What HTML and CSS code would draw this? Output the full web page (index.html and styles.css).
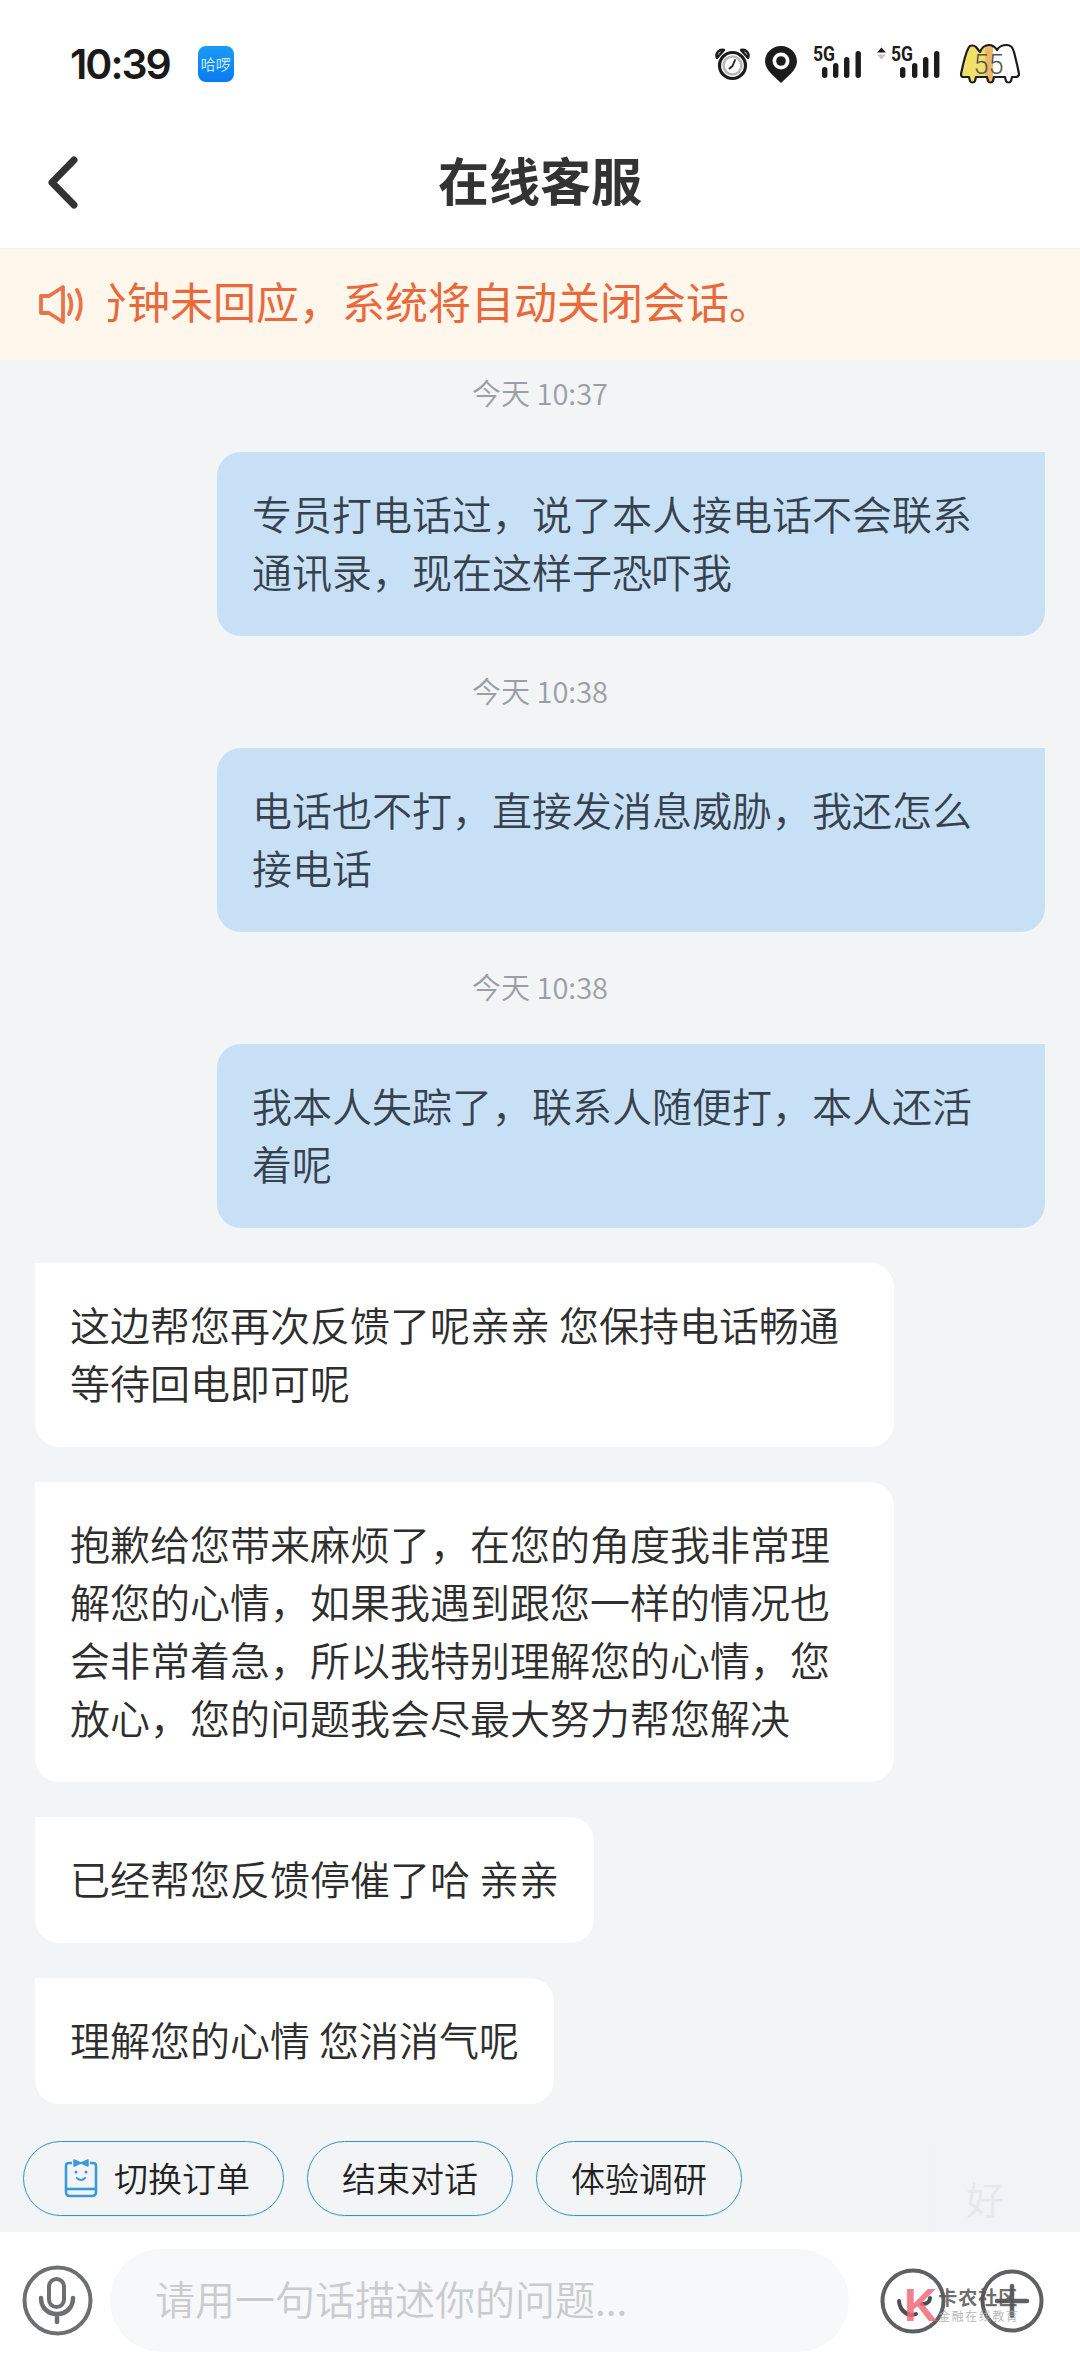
FILE: index.html
```html
<!DOCTYPE html>
<html lang="zh-CN">
<head>
    <meta charset="UTF-8">
    <meta name="viewport" content="width=device-width, initial-scale=1.0">
    <title>在线客服</title>
    <link rel="stylesheet" href="styles.css">
</head>
<body>
    <div class="status">
        <div class="status-left">
            <span class="clock">10:39</span>
            <span class="app-badge">哈啰</span>
        </div>
        <div class="status-right">
            <svg class="ic-alarm" viewBox="0 0 35 32">
                <path d="M2 10 C0 5 4 1 9 2 L2 10Z M33 10 C35 5 31 1 26 2 L33 10Z" fill="#b5b5b5" stroke="#1c1c1c" stroke-width="2.400" stroke-linejoin="round"/>
                <circle cx="17.500" cy="17.500" r="13" fill="#fff" stroke="#1c1c1c" stroke-width="3.200"/>
                <circle cx="17.500" cy="17.500" r="9" fill="#fff" stroke="#b8b8b8" stroke-width="2.600"/>
                <path d="M20 12 L17.500 18 L14.500 20.500" fill="none" stroke="#1c1c1c" stroke-width="1.800" stroke-linecap="round"/>
            </svg>
            <svg class="ic-pin" viewBox="0 0 32 37">
                <path d="M16 0 C7 0 0 7 0 15.500 C0 24 10 31 16 37 C22 31 32 24 32 15.500 C32 7 25 0 16 0Z" fill="#1c1c1c"/>
                <circle cx="16" cy="15" r="8.500" fill="#fff"/>
                <circle cx="16" cy="15" r="4.800" fill="#1c1c1c"/>
            </svg>
            <svg class="ic-sig1" viewBox="0 0 48 37">
                <text x="0" y="15" class="sig-text" textLength="22" lengthAdjust="spacingAndGlyphs">5G</text>
                <g fill="#1c1c1c">
                    <rect x="9" y="21" width="5.400" height="11" rx="2.700"/>
                    <rect x="20" y="17" width="5.400" height="15" rx="2.700"/>
                    <rect x="31" y="11" width="5.400" height="21" rx="2.700"/>
                    <rect x="42.500" y="5" width="5.400" height="27" rx="2.700"/>
                </g>
            </svg>
            <svg class="ic-sig2" viewBox="0 0 63 37">
                <path d="M0 6.500 L4.500 1.500 L9 6.500Z" fill="#1c1c1c"/>
                <path d="M0 8.500 L4.500 13.500 L9 8.500Z" fill="#c4c4c4"/>
                <text x="14" y="15" class="sig-text" textLength="22" lengthAdjust="spacingAndGlyphs">5G</text>
                <g fill="#1c1c1c">
                    <rect x="23" y="21" width="5.400" height="11" rx="2.700"/>
                    <rect x="35" y="17" width="5.400" height="15" rx="2.700"/>
                    <rect x="46" y="11" width="5.400" height="21" rx="2.700"/>
                    <rect x="57" y="5" width="5.400" height="27" rx="2.700"/>
                </g>
            </svg>
            <svg class="ic-batt" viewBox="0 0 60 40">
                <defs>
                    <linearGradient id="battFill">
                        <stop offset="0.42" stop-color="#efe06a"/>
                        <stop offset="0.42" stop-color="#efb765"/>
                        <stop offset="0.56" stop-color="#efb765"/>
                        <stop offset="0.56" stop-color="#fff"/>
                    </linearGradient>
                </defs>
                <path d="M1 30 C3 20 6 8 9 3 C10 1 14 1 16 3 L20 8 C22 3 25 1 29 1 C32 1 35 3 37 6 C39 2 43 1 47 1 C51 1 53 4 54 8 C56 16 58 24 59 30 C59 32 57 33 55 33 L52 33 L51 37 C50 39 47 39 46 37 L45 33 L34 33 L33 37 C32 39 29 39 28 37 L27 33 L16 33 L15 37 C14 39 11 39 10 37 L9 33 L3 33 C1 33 1 31 1 30Z" fill="url(#battFill)" stroke="#1c1c1c" stroke-width="2.200" stroke-linejoin="round"/>
                <text x="28.500" y="30" class="batt-text" text-anchor="middle">55</text>
            </svg>
        </div>
    </div>

    <div class="nav">
        <svg class="ic-back" viewBox="0 0 30 53">
            <path d="M26 4 L4 26.500 L26 49" fill="none" stroke="#333" stroke-width="7" stroke-linecap="round" stroke-linejoin="round"/>
        </svg>
        <h1 class="title">在线客服</h1>
    </div>

    <div class="notice">
        <svg class="ic-horn" viewBox="0 0 44 39">
            <path d="M2 11 H10 L24 2 V37 L10 28 H2Z" fill="none" stroke="#e9734a" stroke-width="3.800" stroke-linejoin="round"/>
            <path d="M30 10 C33 16 33 23 30 29 M38 5 C43 14 43 25 38 34" fill="none" stroke="#e9734a" stroke-width="3.800" stroke-linecap="round"/>
        </svg>
        <div class="notice-clip"><span class="notice-text">分钟未回应，系统将自动关闭会话。</span></div>
    </div>

    <div class="chat">
        <div class="time first">今天 10:37</div>
        <div class="bubble mine">专员打电话过，说了本人接电话不会联系通讯录，现在这样子恐吓我</div>
        <div class="time">今天 10:38</div>
        <div class="bubble mine">电话也不打，直接发消息威胁，我还怎么接电话</div>
        <div class="time">今天 10:38</div>
        <div class="bubble mine">我本人失踪了，联系人随便打，本人还活着呢</div>
        <div class="bubble agent">这边帮您再次反馈了呢亲亲 您保持电话畅通等待回电即可呢</div>
        <div class="bubble agent">抱歉给您带来麻烦了，在您的角度我非常理解您的心情，如果我遇到跟您一样的情况也会非常着急，所以我特别理解您的心情，您放心，您的问题我会尽最大努力帮您解决</div>
        <div class="bubble agent">已经帮您反馈停催了哈 亲亲</div>
        <div class="bubble agent">理解您的心情 您消消气呢</div>

        <div class="chips">
            <div class="chip chip-icon">
                <svg class="ic-order" viewBox="0 0 34 39">
                    <path d="M8 4 H5 Q2 4 2 7 V33 Q2 37 6 37 H28 Q32 37 32 33 V7 Q32 4 29 4 H26" fill="none" stroke="#3a9ad9" stroke-width="2.600"/>
                    <path d="M10 1 L17 4 L24 1 V7 L17 4 L10 7Z" fill="#3a9ad9" stroke="#3a9ad9" stroke-width="1.500" stroke-linejoin="round"/>
                    <path d="M2 30 H32" fill="none" stroke="#3a9ad9" stroke-width="2.600"/>
                    <circle cx="12" cy="13" r="1.500" fill="#3a9ad9"/>
                    <circle cx="22" cy="13" r="1.500" fill="#3a9ad9"/>
                    <path d="M13 19 Q17 23 21 19" fill="none" stroke="#3a9ad9" stroke-width="2" stroke-linecap="round"/>
                </svg>
                切换订单
            </div>
            <div class="chip">结束对话</div>
            <div class="chip">体验调研</div>
        </div>
        <div class="faint-tag">好</div>
    </div>

    <div class="inputbar">
        <svg class="ic-mic" viewBox="0 0 71 71">
            <circle cx="35.500" cy="35.500" r="33" fill="none" stroke="#6e6f72" stroke-width="4"/>
            <rect x="27" y="14" width="15" height="28" rx="7.500" fill="none" stroke="#6e6f72" stroke-width="4"/>
            <path d="M19 33 C19 43 26 49 35 49 C44 49 51 43 51 33 M35 49 V57" fill="none" stroke="#6e6f72" stroke-width="4.500" stroke-linecap="round"/>
        </svg>
        <div class="input">请用一句话描述你的问题...</div>
        <svg class="ic-emoji" viewBox="0 0 66 66">
            <circle cx="33" cy="33" r="30.500" fill="none" stroke="#5f6064" stroke-width="4"/>
            <path d="M19 33 C20 44 29 49 36 46 M42 36 C46 36 50 34 50 30" fill="none" stroke="#4c4d50" stroke-width="4" stroke-linecap="round"/>
        </svg>
        <svg class="ic-plus" viewBox="0 0 64 64">
            <circle cx="32" cy="32" r="29.500" fill="none" stroke="#5f6064" stroke-width="4"/>
            <path d="M17 32 H47 M32 17 V47" fill="none" stroke="#5f6064" stroke-width="4.500" stroke-linecap="round"/>
        </svg>
        <div class="watermark">
            <span class="wm-k">K</span>
            <div class="wm-words">
                <div class="wm-name">卡农社区</div>
                <div class="wm-sub">金融在线教育</div>
            </div>
        </div>
    </div>
</body>
</html>
```

FILE: styles.css
```css
* { box-sizing: border-box; margin: 0; padding: 0; }
body { width: 1080px; height: 2376px; overflow: hidden; display: flex; flex-direction: column; background: #fff; font-family: "Noto Sans CJK SC", "Noto Sans", sans-serif; font-weight: 350; color: #333; }
svg { overflow: visible; }

.status { height: 128px; flex: none; display: flex; justify-content: space-between; align-items: center; padding: 0 60px 0 70px; }
.status-left { display: flex; align-items: center; gap: 28px; }
.clock { font-family: Inter, Roboto, sans-serif; font-size: 41px; font-weight: 600; letter-spacing: -2px; color: #1a1a1a; }
.app-badge { width: 36px; height: 36px; border-radius: 8px; background: linear-gradient(180deg, #1c9bf6, #0a7bf2); color: #d9f1ff; font-size: 15px; line-height: 36px; text-align: center; white-space: nowrap; }
.status-right { display: flex; align-items: center; }
.ic-alarm { width: 35px; height: 32px; margin-right: 15px; }
.ic-pin { width: 32px; height: 37px; margin-right: 16px; }
.ic-sig1 { width: 48px; height: 37px; margin-right: 16px; }
.ic-sig2 { width: 63px; height: 37px; margin-right: 20px; }
.ic-batt { width: 60px; height: 40px; }
.sig-text { font-family: Roboto, sans-serif; font-size: 20px; font-weight: 700; fill: #1c1c1c; }
.batt-text { font-family: Roboto, sans-serif; font-size: 27px; fill: #555; }

.nav { height: 120px; flex: none; padding-bottom: 18px; position: relative; display: flex; align-items: center; justify-content: center; }
.ic-back { position: absolute; left: 48px; top: 28px; width: 30px; height: 53px; }
.title { font-size: 51px; font-weight: 700; line-height: 1; color: #333; }

.notice { height: 112px; flex: none; display: flex; align-items: center; padding-left: 39px; background: #fff6ec; border-top: 1px solid #fbf3ea; }
.ic-horn { width: 44px; height: 39px; margin-right: 25px; }
.notice-clip { flex: 1; overflow: hidden; white-space: nowrap; padding-bottom: 10px; }
.notice-text { display: block; margin-left: -24px; font-size: 43px; font-weight: 400; line-height: 60px; color: #e9693a; }

.chat { flex: 1; min-height: 0; position: relative; display: flex; flex-direction: column; align-items: flex-start; padding: 0 35px; background: #f3f4f6; }
.time { width: 100%; height: 40px; margin: 34px 0 38px; text-align: center; font-size: 29px; line-height: 40px; color: #9a9fa6; }
.time.first { margin: 12px 0 40px; }
.bubble { width: fit-content; padding: 32px 35px 36px; font-size: 40px; line-height: 58px; }
.mine { width: 828px; align-self: flex-end; background: #c8e0f6; color: #36424e; border-radius: 24px 0 24px 24px; }
.agent { max-width: 859px; margin-top: 35px; background: #fff; color: #2e2e2e; border-radius: 0 24px 24px 24px; }

.chips { display: flex; gap: 23px; margin: 37px 0 0 -12px; }
.chip { height: 75px; padding: 0 34px 3px; display: flex; align-items: center; font-size: 34px; color: #222; border: 1px solid #3d92bf; border-radius: 38px; box-shadow: 0 0 0 1px #e0f2fb; }
.chip-icon { padding: 0 33px 3px 40px; }
.ic-order { width: 34px; height: 39px; margin: 3px 16px 0 0; }
.faint-tag { position: absolute; right: 39px; bottom: 0; width: 112px; height: 90px; padding-top: 30px; text-align: center; font-size: 38px; line-height: 52px; color: #e6e8eb; background: #f1f3f6; }

.inputbar { height: 144px; flex: none; position: relative; display: flex; align-items: center; padding: 0 0 7px 22px; background: #fff; }
.ic-mic { width: 71px; height: 71px; }
.input { width: 739px; height: 103px; margin-left: 17px; padding-left: 45px; border-radius: 52px; background: #f7f8fa; font-size: 40px; line-height: 98px; color: #c9cbce; }
.ic-emoji { width: 66px; height: 66px; margin-left: 31px; }
.ic-plus { width: 64px; height: 64px; margin-left: 34px; }
.watermark { position: absolute; left: 904px; top: 54px; display: flex; align-items: flex-start; gap: 1px; opacity: 0.85; }
.wm-k { font-family: "Liberation Sans", sans-serif; font-size: 46px; font-weight: 700; line-height: 38px; color: #ef6b7c; }
.wm-name { font-size: 19px; font-weight: 700; line-height: 22px; letter-spacing: 1px; color: #555; }
.wm-sub { font-size: 12px; line-height: 16px; letter-spacing: 1.500px; color: #aaa; white-space: nowrap; }
```
